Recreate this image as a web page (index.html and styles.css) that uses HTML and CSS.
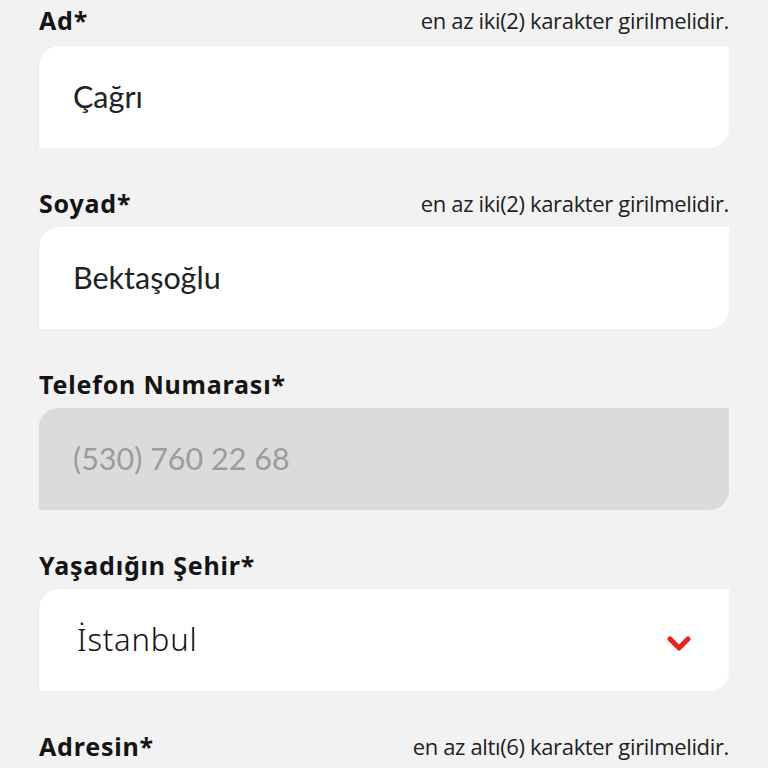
FILE: index.html
```html
<!DOCTYPE html>
<html lang="tr">
<head>
<meta charset="utf-8">
<link rel="stylesheet" href="styles.css">
</head>
<body>
<form class="form">
  <div class="group">
    <div class="label-row">
      <span class="label">Ad*</span>
      <span class="hint">en az iki(2) karakter girilmelidir.</span>
    </div>
    <div class="field"><span class="value">Çağrı</span></div>
  </div>
  <div class="group">
    <div class="label-row">
      <span class="label">Soyad*</span>
      <span class="hint">en az iki(2) karakter girilmelidir.</span>
    </div>
    <div class="field"><span class="value">Bektaşoğlu</span></div>
  </div>
  <div class="group">
    <div class="label-row">
      <span class="label">Telefon Numarası*</span>
    </div>
    <div class="field disabled"><span class="value placeholder">(530) 760 22 68</span></div>
  </div>
  <div class="group">
    <div class="label-row">
      <span class="label">Yaşadığın Şehir*</span>
    </div>
    <div class="field select"><span class="value city">İstanbul</span>
      <svg class="chevron" width="24" height="16" viewBox="0 0 24 16"><path d="M3 3 L12 12 L21 3" fill="none" stroke="#e8231f" stroke-width="5" stroke-linecap="round" stroke-linejoin="round"/></svg>
    </div>
  </div>
  <div class="group">
    <div class="label-row">
      <span class="label">Adresin*</span>
      <span class="hint">en az altı(6) karakter girilmelidir.</span>
    </div>
  </div>
</form>
</body>
</html>
```
FILE: styles.css
```css
html, body {
  margin: 0;
  padding: 0;
  background: #f2f2f2;
}
html {
  height: 768px;
  overflow: hidden;
}
body {
  font-family: "Noto Sans", "Open Sans", sans-serif;
  color: #1a1a1a;
}
.form {
  padding: 0 39px;
  display: flex;
  flex-direction: column;
  gap: 43px;
}
.group {
  display: flex;
  flex-direction: column;
}
.label-row {
  height: 36px;
  box-sizing: border-box;
  padding-bottom: 12px;
  display: flex;
  justify-content: space-between;
  align-items: flex-end;
}
.group:first-child .label-row {
  height: 46px;
  padding-bottom: 14px;
}
.label {
  font-family: "Noto Sans", sans-serif;
  font-weight: 700;
  font-size: 25px;
  line-height: 24px;
  letter-spacing: 0.8px;
  color: #141414;
}
.hint {
  font-family: "Open Sans", sans-serif;
  font-size: 22px;
  line-height: 24px;
  color: #222;
  letter-spacing: -0.35px;
}
.field {
  height: 102px;
  background: #fff;
  border-radius: 20px 0 20px 0;
  display: flex;
  align-items: center;
  padding: 0 34px;
  box-sizing: border-box;
  box-shadow: -1px 0 1px rgba(0,0,0,0.03);
}
.value {
  font-family: "Lato", sans-serif;
  font-size: 30.5px;
  color: #222;
  margin-top: -3px;
}
.field.disabled {
  background: #dcdbdb;
}
.placeholder {
  color: #9c9c9c;
}
.select {
  justify-content: space-between;
  padding: 0 38px 0 38px;
}
.city {
  font-family: "Noto Sans", sans-serif;
  font-weight: 300;
  font-size: 31px;
  letter-spacing: 0.8px;
  color: #111;
}
.chevron {
  display: block;
  margin-top: 8px;
}
```
